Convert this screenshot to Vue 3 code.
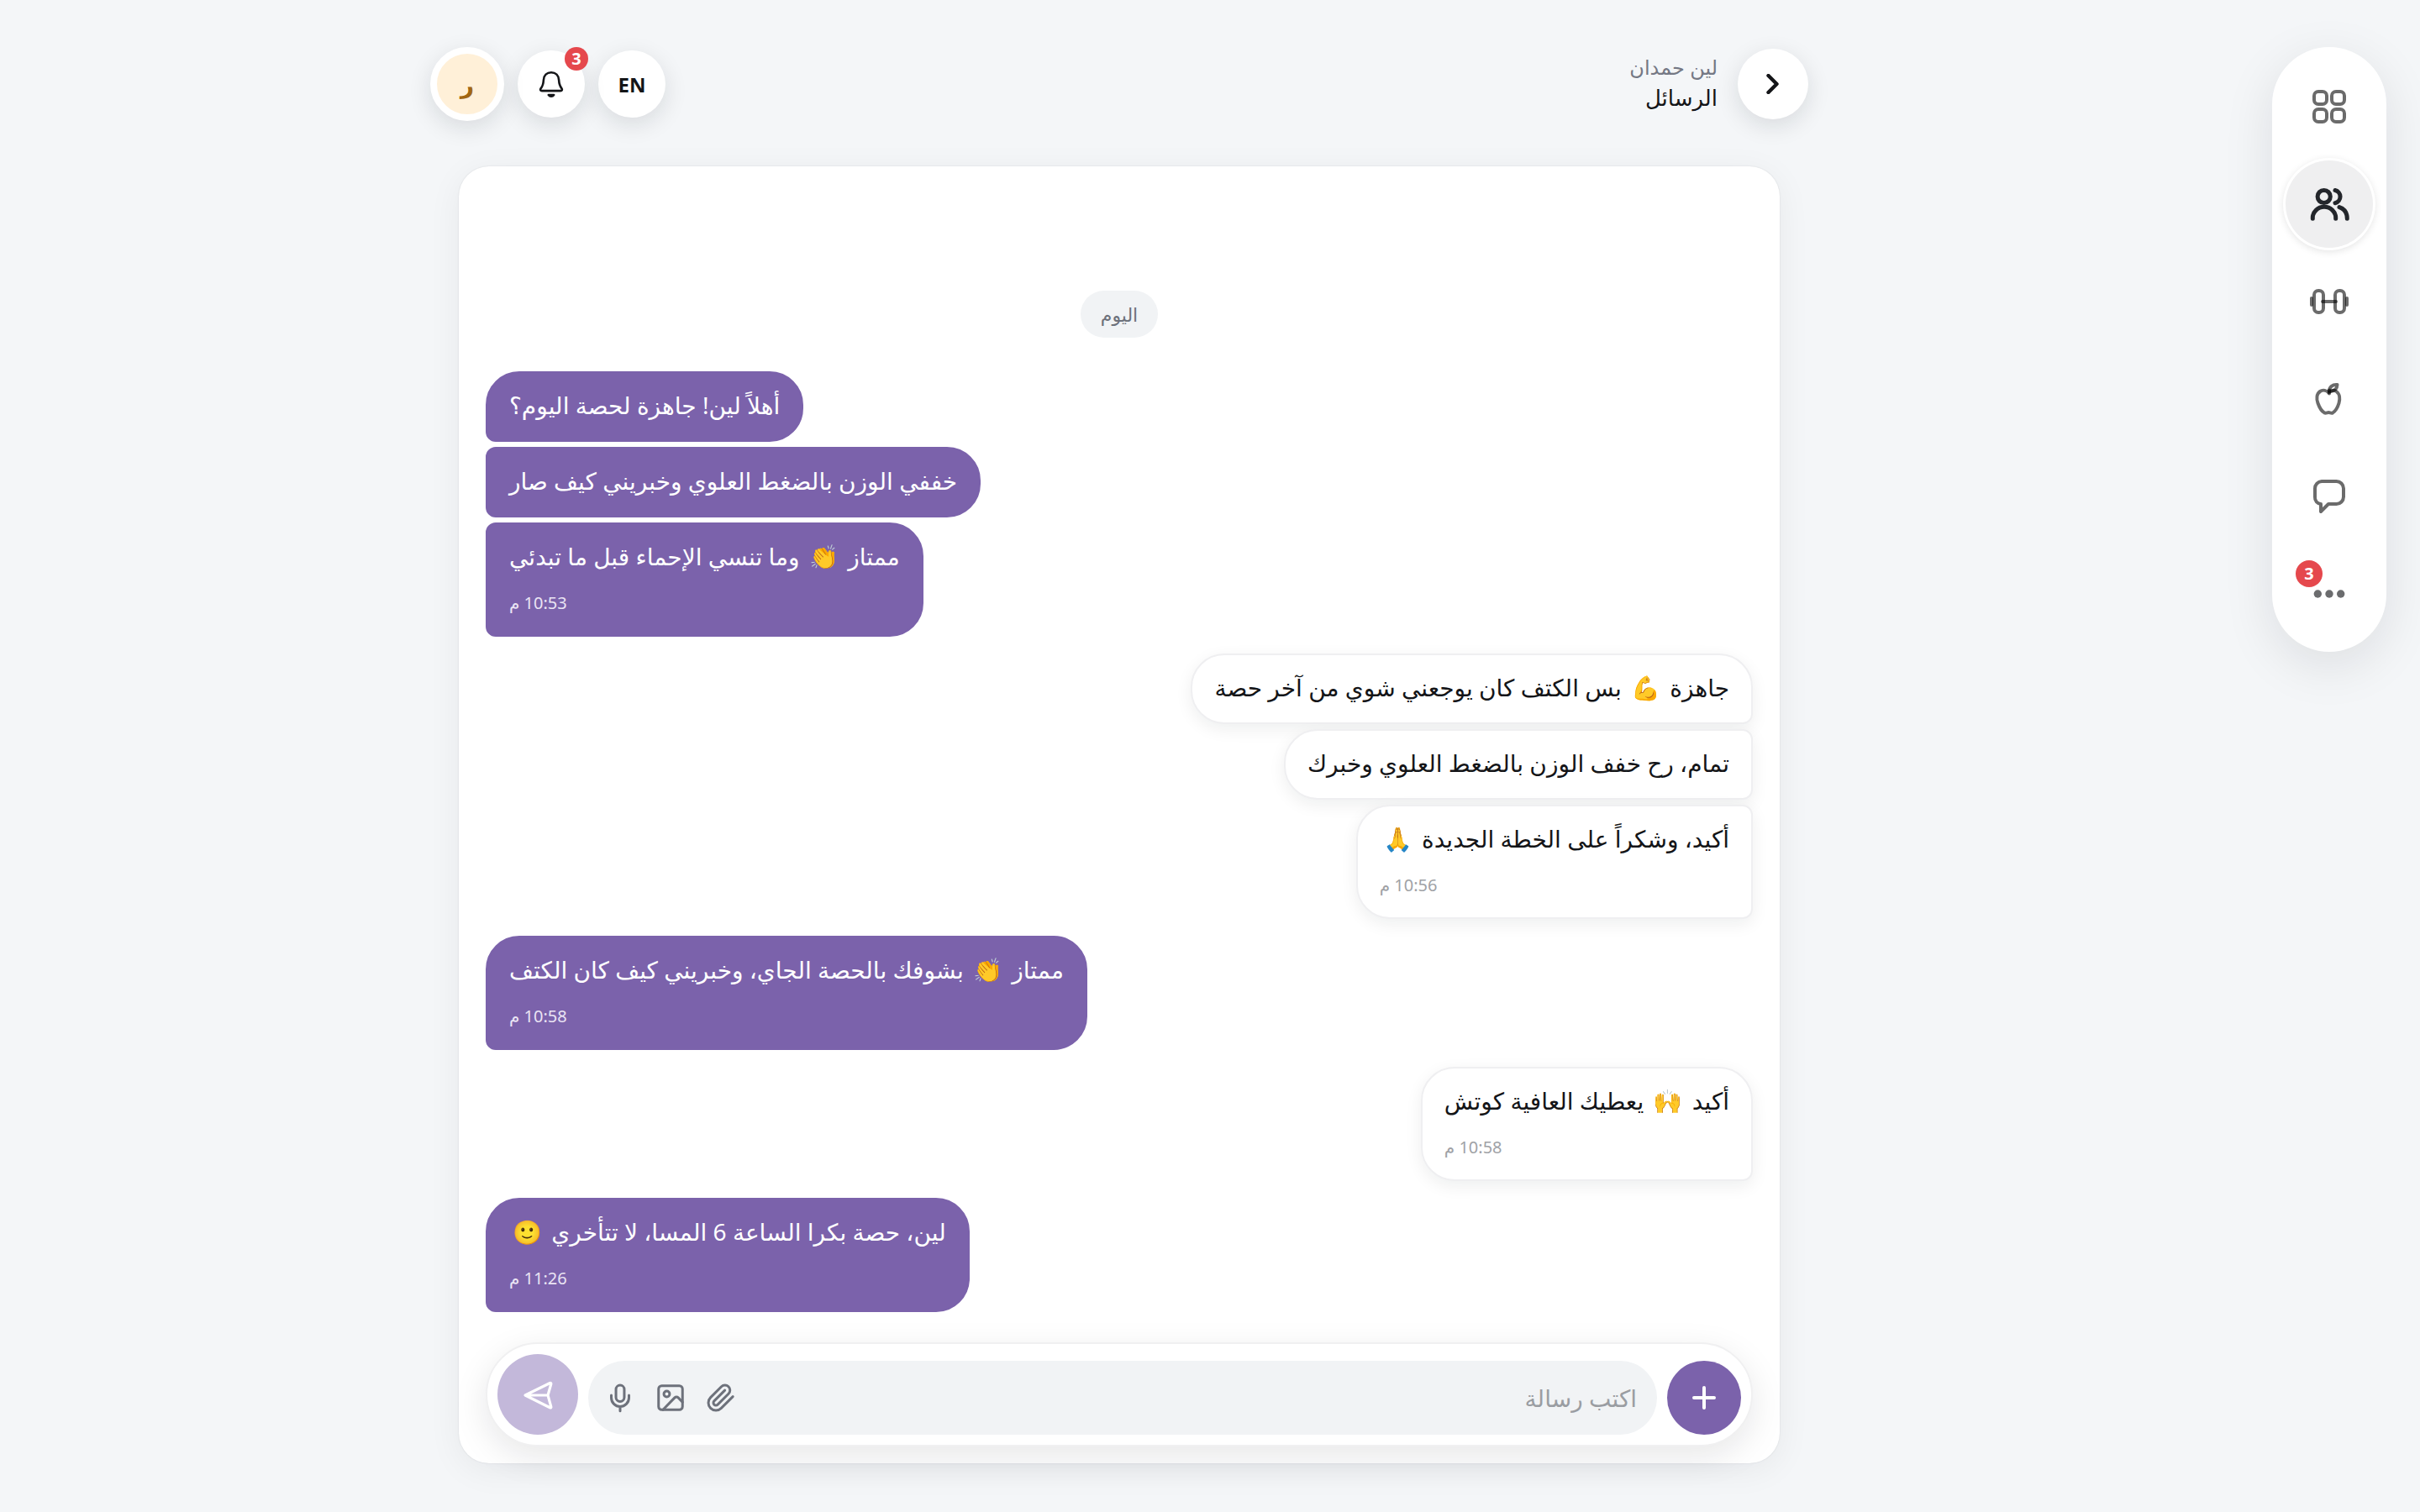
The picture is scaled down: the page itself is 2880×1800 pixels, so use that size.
<script setup>
import { ref } from 'vue'

const draft = ref('')

const navItems = [
  { id: 'home', label: 'الرئيسية' },
  { id: 'clients', label: 'المتدربون', active: true },
  { id: 'workouts', label: 'التمارين' },
  { id: 'nutrition', label: 'التغذية' },
  { id: 'chat', label: 'الرسائل' },
  { id: 'more', label: 'المزيد', badge: 3 },
]

const groups = [
  {
    mine: true,
    messages: ['أهلاً لين! جاهزة لحصة اليوم؟', 'خففي الوزن بالضغط العلوي وخبريني كيف صار', 'ممتاز 👏 وما تنسي الإحماء قبل ما تبدئي'],
    time: '10:53 م',
  },
  {
    mine: false,
    messages: ['جاهزة 💪 بس الكتف كان يوجعني شوي من آخر حصة', 'تمام، رح خفف الوزن بالضغط العلوي وخبرك', 'أكيد، وشكراً على الخطة الجديدة 🙏'],
    time: '10:56 م',
  },
  { mine: true, messages: ['ممتاز 👏 بشوفك بالحصة الجاي، وخبريني كيف كان الكتف'], time: '10:58 م' },
  { mine: false, messages: ['أكيد 🙌 يعطيك العافية كوتش'], time: '10:58 م' },
  { mine: true, messages: ['لين، حصة بكرا الساعة 6 المسا، لا تتأخري 🙂'], time: '11:26 م' },
]

// Splits a message into plain text and emoji, so that emoji get their own side margin.
const parts = (text) =>
  text
    .split(/(\p{Extended_Pictographic})/u)
    .filter(Boolean)
    .map((value) => ({ value, emoji: /\p{Extended_Pictographic}/u.test(value) }))
</script>

<template>
  <div class="app" dir="rtl" lang="ar">
    <aside class="side">
      <nav class="rail">
        <button v-for="item in navItems" :key="item.id" type="button" class="rail-item" :class="{ active: item.active }" :aria-label="item.label">
          <svg v-if="item.id === 'home'" class="nav-icon" viewBox="0 0 48 48">
            <rect x="6" y="6" width="15" height="15" rx="5" /><rect x="27" y="6" width="15" height="15" rx="5" />
            <rect x="6" y="27" width="15" height="15" rx="5" /><rect x="27" y="27" width="15" height="15" rx="5" />
          </svg>
          <svg v-else-if="item.id === 'clients'" class="nav-icon strong" viewBox="0 0 48 48">
            <circle cx="17.7" cy="15" r="7.6" />
            <path d="M4.3 41.3v-1a13.7 13 0 0 1 27.4 0v1" />
            <path d="M31 7.5a7.8 7.8 0 0 1 0 15.2" />
            <path d="M36 27.6c6 2 9.3 7 9.3 13.7" />
          </svg>
          <svg v-else-if="item.id === 'workouts'" class="nav-icon" viewBox="0 0 48 48">
            <rect x="6" y="11" width="11" height="26" rx="5" /><rect x="31" y="11" width="11" height="26" rx="5" />
            <path d="M16 24h16" /><path d="M3 20v8" /><path d="M45 20v8" />
          </svg>
          <svg v-else-if="item.id === 'nutrition'" class="nav-icon" viewBox="0 0 48 48">
            <path d="M23.500 16.500c-2.500-2.500-7-4-10.500-1.500-4.200 3-4.300 9-2.500 14 1.700 4.800 4.500 9.500 7.700 11.400 1.800.9 3.500-.4 5-.4s3.300 1.300 5 .4c3.200-1.900 5.800-6.600 7.300-11.400 1.500-5 1-11-3-14-3-2.300-6.700-1-9 1.500z" />
            <path d="M24 17.500v-4" />
            <path d="M24 15c0-5.500 4-8.500 9.500-8-.2 5-3.500 8-9.500 8z" />
          </svg>
          <svg v-else-if="item.id === 'chat'" class="nav-icon" viewBox="0 0 48 48">
            <path d="M15 6h17.500a8.500 8.500 0 0 1 8.500 8.500v10a8.500 8.500 0 0 1-8.500 8.500H23l-9 9v-9a7.500 7.500 0 0 1-7-8V14.500A8.500 8.500 0 0 1 15 6z" />
          </svg>
          <svg v-else class="nav-icon dots" viewBox="0 0 48 48">
            <circle cx="10.300" cy="24" r="4.700" /><circle cx="24" cy="24" r="4.700" /><circle cx="37.700" cy="24" r="4.700" />
          </svg>
          <span v-if="item.badge" class="badge rail-badge">{{ item.badge }}</span>
        </button>
      </nav>
    </aside>

    <main class="main">
      <header class="top">
        <button type="button" class="round back" aria-label="رجوع">
          <svg width="24" height="24" viewBox="0 0 24 24"><path d="M6.500 2l10 10-10 10" stroke-width="4.400" /></svg>
        </button>
        <div class="titles">
          <p class="subtitle">لين حمدان</p>
          <h1 class="title">الرسائل</h1>
        </div>
        <button type="button" class="round small lang">EN</button>
        <button type="button" class="round small" aria-label="الإشعارات">
          <svg width="36" height="36" viewBox="0 0 36 36" stroke-width="2.600">
            <path d="M18 4.200c-5.300 0-8.800 3.800-9.100 9-.3 5-1.300 7.600-3.200 9.900-1.200 1.500-.6 3 1.300 3h22c1.900 0 2.500-1.500 1.300-3-1.900-2.300-2.900-4.900-3.200-9.900-.3-5.200-3.800-9-9.100-9z" />
            <path d="M14.800 31c1.600 2.300 4.800 2.300 6.400 0z" />
          </svg>
          <span class="badge bell-badge">3</span>
        </button>
        <button type="button" class="round avatar">ر</button>
      </header>

      <section class="card">
        <div class="thread">
          <time class="day">اليوم</time>
          <div v-for="(group, g) in groups" :key="g" class="group" :class="{ mine: group.mine }">
            <div v-for="(text, m) in group.messages" :key="m" class="bubble">
              <p class="text"><span v-for="(part, p) in parts(text)" :key="p" :class="{ emoji: part.emoji }">{{ part.value }}</span></p>
              <time v-if="m === group.messages.length - 1" class="stamp">{{ group.time }}</time>
            </div>
          </div>
        </div>

        <form class="composer" @submit.prevent>
          <button type="button" class="add" aria-label="إضافة">
            <svg width="32" height="32" viewBox="0 0 32 32"><path d="M16 4v24M4 16h24" stroke-width="4" /></svg>
          </button>
          <div class="field">
            <input v-model="draft" class="input" type="text" placeholder="اكتب رسالة" aria-label="اكتب رسالة" />
            <button type="button" class="tool" aria-label="إرفاق ملف">
              <svg width="36" height="36" viewBox="0 0 24 24"><path d="M21.440 11.050l-9.190 9.190a6 6 0 0 1-8.490-8.490l8.570-8.570A4 4 0 1 1 18 8.840l-8.590 8.570a2 2 0 0 1-2.830-2.830l8.490-8.480" /></svg>
            </button>
            <button type="button" class="tool" aria-label="إرفاق صورة">
              <svg width="36" height="36" viewBox="0 0 24 24"><rect x="2.500" y="2.500" width="19" height="19" rx="2.500" /><circle cx="9" cy="9" r="2.300" /><path d="M21.500 15.500l-3.400-3.600a2 2 0 0 0-2.800 0L6 21.500" /></svg>
            </button>
            <button type="button" class="tool" aria-label="تسجيل صوتي">
              <svg width="36" height="36" viewBox="0 0 24 24"><rect x="8.700" y="2" width="6.600" height="13" rx="3.300" /><path d="M19 10v2a7 7 0 0 1-14 0v-2M12 19v3.500" /></svg>
            </button>
          </div>
          <button type="submit" class="send" aria-label="إرسال" disabled>
            <svg width="40" height="40" viewBox="0 0 40 40"><path d="M5 21L34.500 6.500c1-.4 1.600.2 1.300 1.200L32 21l3.800 13.600c.3 1-.3 1.600-1.300 1.200zM32 21H6" stroke-width="3.200" /></svg>
          </button>
        </form>
      </section>
    </main>
  </div>
</template>

<style>
body {
  background: #f4f6f8;
}
</style>

<style scoped>
.app {
  display: flex;
  align-items: flex-start;
  box-sizing: border-box;
  min-height: 100vh;
  color: #141518;
  background: #f4f6f8;
  font-family: "Noto Sans", "DejaVu Sans", sans-serif;
}
button {
  display: flex;
  align-items: center;
  justify-content: center;
  flex: none;
  padding: 0;
  border: 0;
  color: inherit;
  background: none;
  font-family: inherit;
}
svg {
  display: block;
  fill: none;
  stroke: currentColor;
  stroke-linecap: round;
  stroke-linejoin: round;
}
p, h1 {
  margin: 0;
}
.side {
  flex: none;
  padding: 56px 40px;
}
.rail {
  display: flex;
  flex-direction: column;
  align-items: center;
  gap: 12px;
  box-sizing: border-box;
  width: 136px;
  padding: 19px 0 17px;
  border-radius: 68px;
  background: #fff;
  box-shadow: 0 16px 60px rgba(20, 24, 32, 0.1);
}
.rail-item {
  position: relative;
  width: 104px;
  height: 104px;
  border-radius: 50%;
}
.rail-item.active {
  background: #efeff0;
  box-shadow: 0 0 0 3px #fff, 0 2px 8px 3px rgba(0, 0, 0, 0.1);
}
.nav-icon {
  width: 48px;
  height: 48px;
  stroke: rgba(0, 0, 0, 0.58);
  stroke-width: 4;
}
.nav-icon.strong {
  stroke: #23262b;
  stroke-width: 5;
}
.nav-icon.dots {
  fill: #6b6c6e;
  stroke: none;
}
.badge {
  position: absolute;
  border-radius: 50%;
  color: #fff;
  background: #e5484d;
  font-weight: 700;
  text-align: center;
}
.rail-badge {
  top: 12px;
  left: 12px;
  width: 32px;
  font-size: 20px;
  line-height: 32px;
}
.main {
  flex: 1;
  min-width: 0;
  max-width: 1640px;
  margin: 0 auto;
  padding: 56px 0;
}
.top {
  display: flex;
  align-items: center;
  gap: 16px;
  height: 88px;
}
.round {
  position: relative;
  border-radius: 50%;
  background: #fff;
  box-shadow: 0 8px 28px rgba(20, 24, 32, 0.12);
}
.back {
  width: 84px;
  height: 84px;
}
.titles {
  flex: 1;
  padding: 0 8px 4px 0;
}
.subtitle {
  color: #747884;
  font-size: 24px;
  line-height: 36px;
}
.title {
  font-size: 26px;
  font-weight: 500;
  line-height: 36px;
}
.small {
  width: 80px;
  height: 80px;
}
.lang {
  font-size: 24px;
  font-weight: 700;
}
.bell-badge {
  top: -4px;
  right: -4px;
  width: 28px;
  font-size: 20px;
  line-height: 28px;
}
.avatar {
  box-sizing: border-box;
  width: 88px;
  height: 88px;
  border: 8px solid #fff;
  color: #a16612;
  background: #fff0d8;
  font-size: 28px;
  font-weight: 700;
}
.card {
  margin: 54px 34px 0;
  padding: 148px 32px 20px;
  border-radius: 36px;
  background: #fff;
  box-shadow: 0 8px 40px rgba(20, 24, 32, 0.06), 0 0 2px rgba(20, 24, 32, 0.12);
}
.thread {
  display: flex;
  flex-direction: column;
  gap: 20px;
}
.day {
  align-self: center;
  margin-bottom: 20px;
  padding: 0 24px;
  border-radius: 28px;
  color: #6d717b;
  background: #f1f3f5;
  font-size: 22px;
  line-height: 56px;
}
.group {
  display: flex;
  flex-direction: column;
  align-items: flex-start;
  gap: 6px;
}
.group.mine {
  align-items: flex-end;
}
.bubble {
  box-sizing: border-box;
  padding: 12px 26px 16px;
  border: 2px solid #efeff1;
  border-radius: 40px 12px 12px 40px;
  background: #fff;
  box-shadow: 0 6px 20px rgba(20, 24, 32, 0.07);
}
.bubble:first-child {
  border-top-right-radius: 40px;
}
.mine .bubble {
  border-color: #7b62ab;
  border-radius: 12px 40px 40px 12px;
  color: #fff;
  background: #7b62ab;
  box-shadow: none;
}
.mine .bubble:first-child {
  border-top-left-radius: 40px;
}
.text {
  font-size: 28px;
  line-height: 52px;
}
.emoji {
  margin: 0 4px;
}
.stamp {
  display: block;
  margin-top: 8px;
  color: #a0a2a6;
  font-size: 20px;
  line-height: 44px;
  text-align: left;
}
.mine .stamp {
  color: #eae4f4;
}
.composer {
  display: flex;
  align-items: flex-end;
  gap: 12px;
  margin-top: 36px;
  padding: 12px;
  border: 2px solid #f0f0f1;
  border-radius: 62px;
  background: #fff;
  box-shadow: 0 12px 40px rgba(20, 24, 32, 0.1);
}
.add {
  width: 88px;
  height: 88px;
  border-radius: 50%;
  color: #fff;
  background: #7b62ab;
}
.field {
  display: flex;
  flex: 1;
  align-items: center;
  gap: 24px;
  min-width: 0;
  height: 88px;
  padding: 0 24px 0 20px;
  border-radius: 44px;
  box-sizing: border-box;
  background: #f1f3f5;
}
.input {
  flex: 1;
  min-width: 0;
  padding: 0;
  border: 0;
  outline: 0;
  color: inherit;
  background: none;
  font-family: inherit;
  font-size: 28px;
  line-height: 52px;
}
.input::placeholder {
  color: #9a9da2;
  opacity: 1;
}
.tool {
  color: #6d717b;
}
.tool svg {
  stroke-width: 2;
}
.send {
  width: 96px;
  height: 96px;
  border-radius: 50%;
  color: #fff;
  background: #c3b8da;
}
</style>
